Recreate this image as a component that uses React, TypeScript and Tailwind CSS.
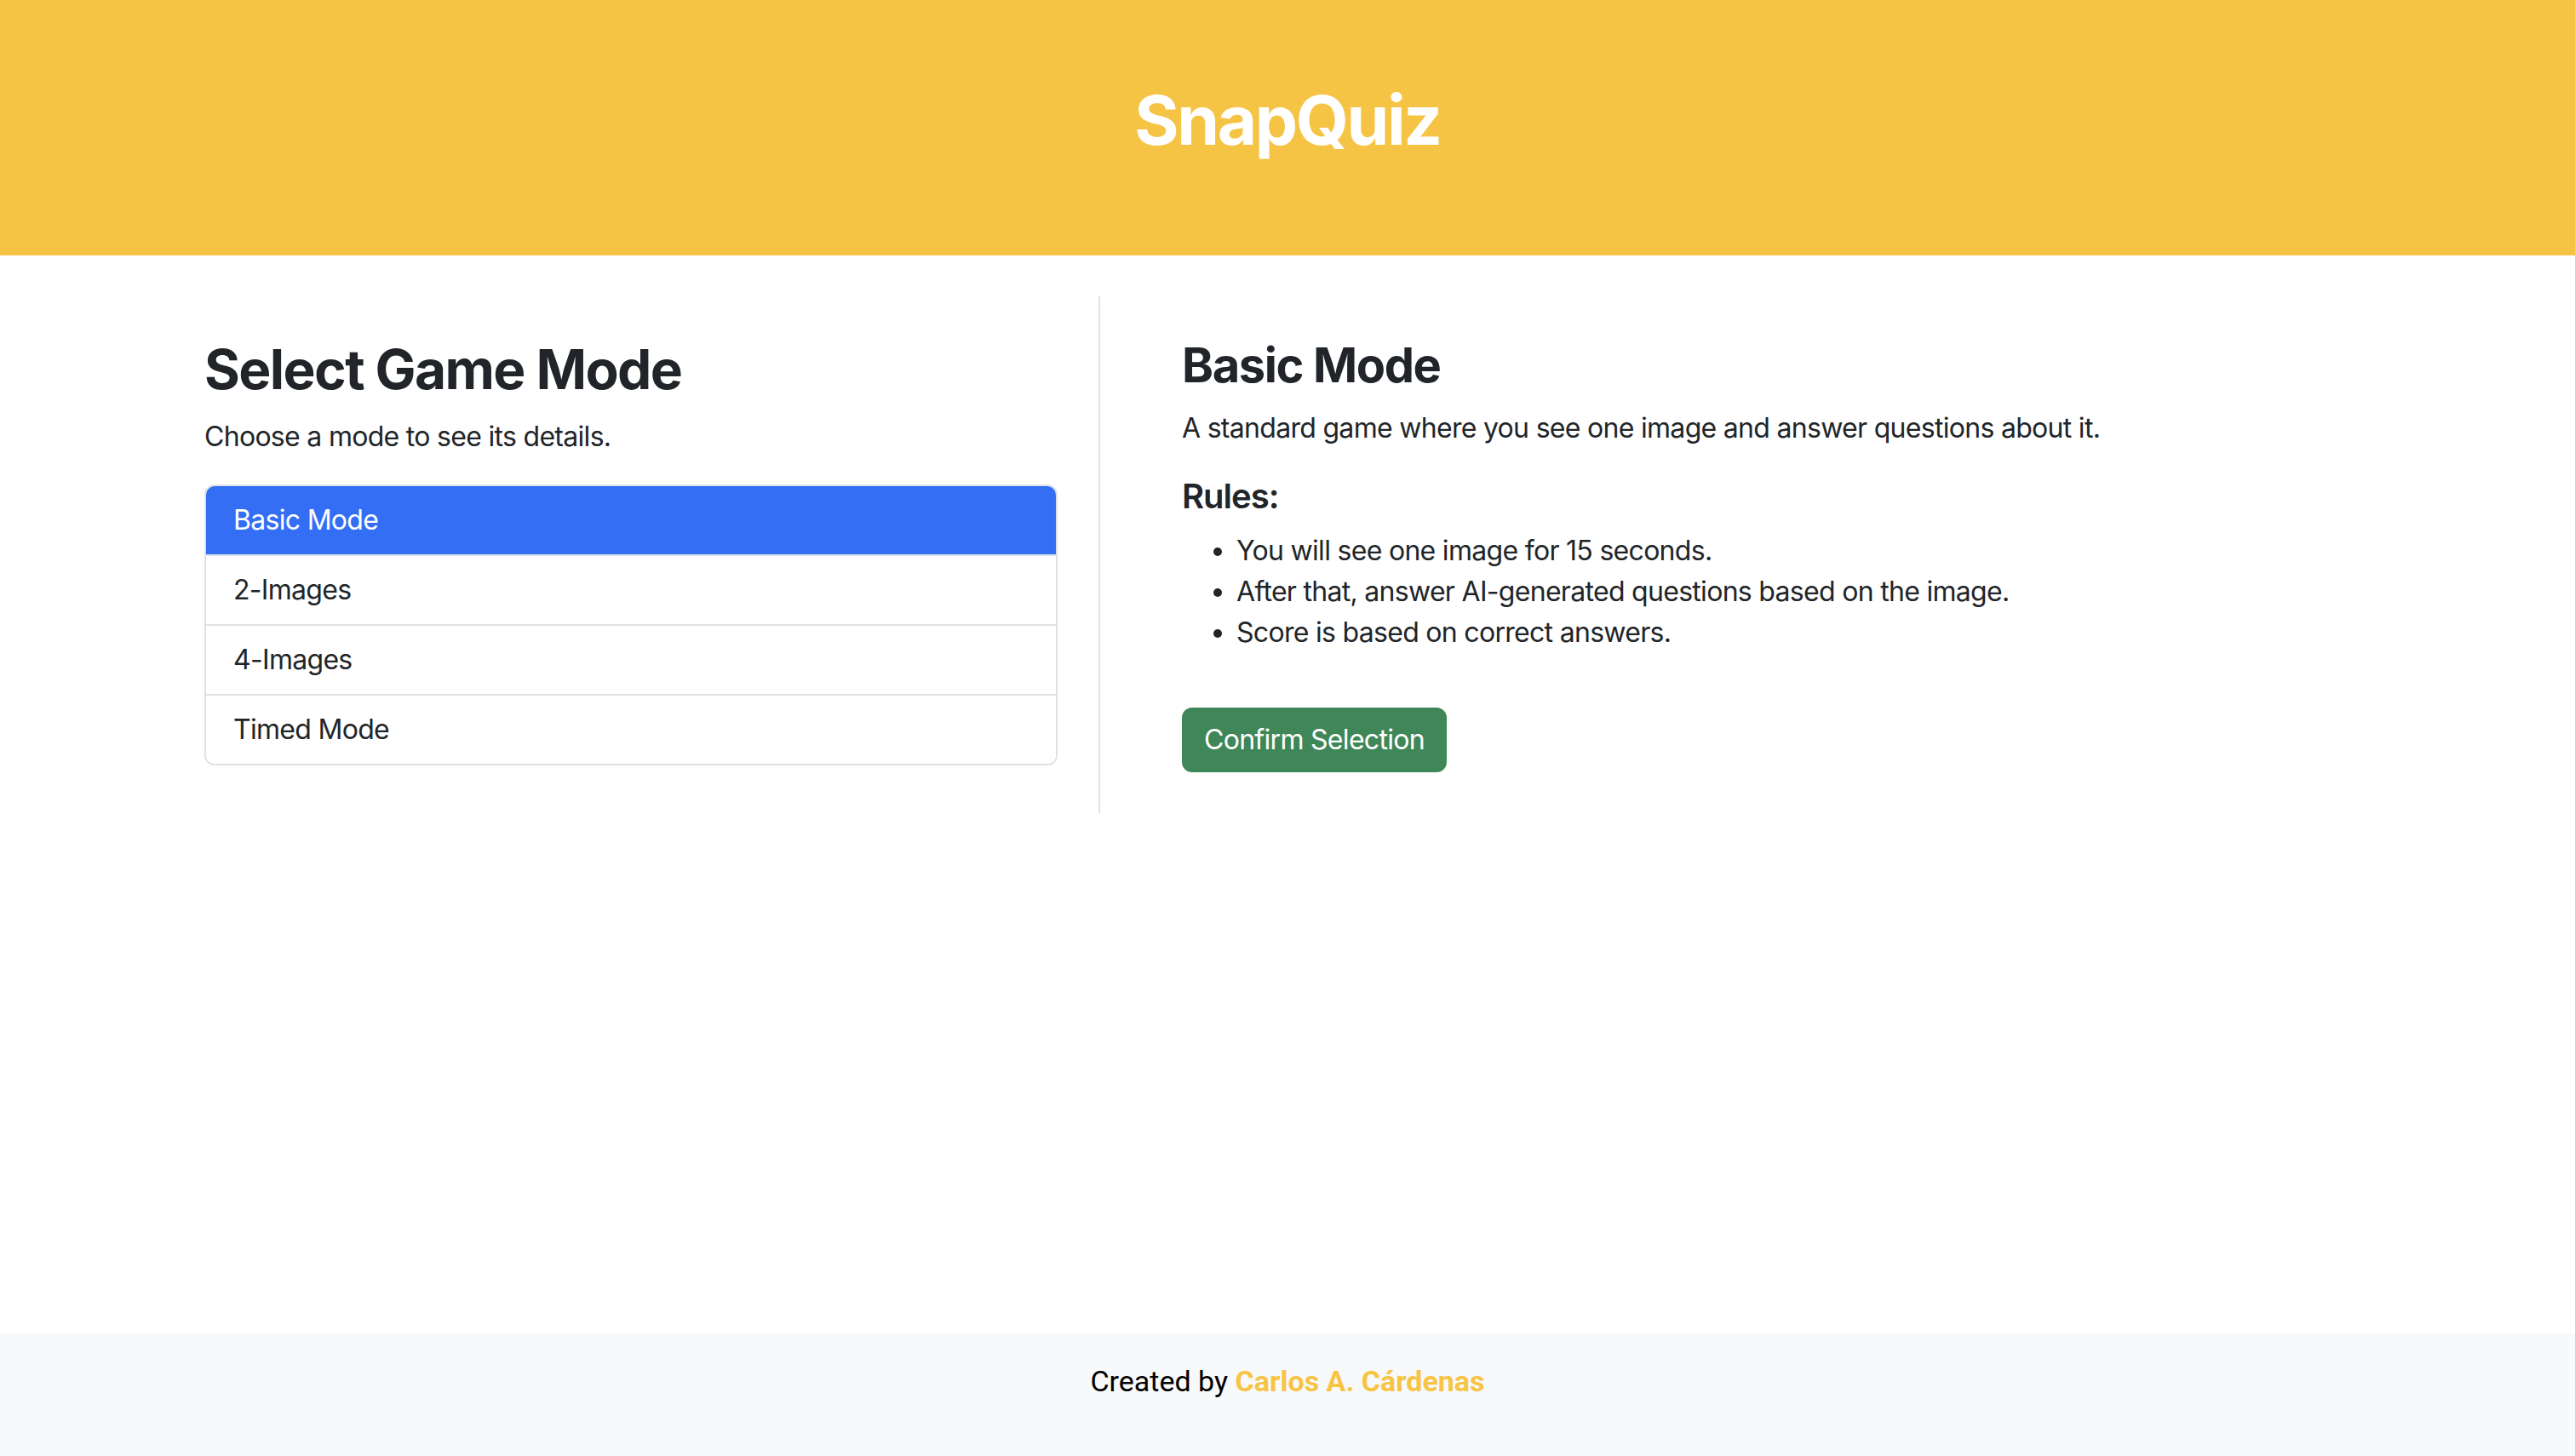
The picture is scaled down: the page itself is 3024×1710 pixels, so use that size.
import { useState } from 'react'

type ModeKey = 'basic' | 'two' | 'four' | 'timed'

interface Mode {
  key: ModeKey
  label: string
  title: string
  description: string
  rules: string[]
}

const MODES: Mode[] = [
  {
    key: 'basic',
    label: 'Basic Mode',
    title: 'Basic Mode',
    description: 'A standard game where you see one image and answer questions about it.',
    rules: [
      'You will see one image for 15 seconds.',
      'After that, answer AI-generated questions based on the image.',
      'Score is based on correct answers.',
    ],
  },
  {
    key: 'two',
    label: '2-Images',
    title: '2-Images',
    description: 'See two images one after another and answer questions about both.',
    rules: [
      'You will see two images for 15 seconds each.',
      'Questions may be about either image.',
      'Score is based on correct answers.',
    ],
  },
  {
    key: 'four',
    label: '4-Images',
    title: '4-Images',
    description: 'A harder game with four images to remember.',
    rules: [
      'You will see four images for 10 seconds each.',
      'Questions may be about any of the images.',
      'Score is based on correct answers.',
    ],
  },
  {
    key: 'timed',
    label: 'Timed Mode',
    title: 'Timed Mode',
    description: 'Answer as many questions as you can before the clock runs out.',
    rules: [
      'You will see one image for 15 seconds.',
      'Each question has a short time limit.',
      'Faster answers earn more points.',
    ],
  },
]

const font = "font-['Inter','Noto_Sans','Liberation_Sans',sans-serif]"

const App = () => {
  const [selected, setSelected] = useState<ModeKey>('basic')
  const mode = MODES.find((m) => m.key === selected) || MODES[0]

  return (
    <div className={`min-h-screen flex flex-col bg-white text-[#212529] tracking-[-0.7px] ${font}`}>
      {/* header */}
      <header className="h-[300px] bg-[#f6c445] pt-[93px] text-center">
        <h1 className="text-[80px] leading-[1.2] font-bold text-white tracking-[-2.4px]">SnapQuiz</h1>
      </header>

      {/* main */}
      <main className="flex-1">
        <div className="mx-auto w-[2640px] mt-[48px] flex">
          {/* mode list */}
          <div className="w-[1100px] shrink-0 p-[48px] border-r-2 border-[#dee2e6]">
            <h2 className="text-[64px] leading-[1.2] font-bold mb-[16px] tracking-[-1.6px]">Select Game Mode</h2>
            <p className="text-[32px] leading-[48px] mb-[32px]">Choose a mode to see its details.</p>
            <div className="flex flex-col border-2 border-[#dee2e6] rounded-[12px] overflow-hidden">
              {MODES.map((m, i) => (
                <button
                  key={m.key}
                  onClick={() => setSelected(m.key)}
                  className={`text-left px-[32px] py-[16px] text-[32px] leading-[48px] ${
                    i > 0 ? 'border-t-2 border-[#dee2e6]' : ''
                  } ${m.key === selected ? 'bg-[#346ef5] text-white' : 'bg-white text-[#212529]'}`}
                >
                  {m.label}
                </button>
              ))}
            </div>
          </div>

          {/* details */}
          <div className="flex-1 pl-[96px] py-[48px]">
            <h3 className="text-[56px] leading-[1.2] font-bold mb-[16px] tracking-[-1.4px]">{mode.title}</h3>
            <p className="text-[32px] leading-[48px] mb-[32px]">{mode.description}</p>
            <h5 className="text-[40px] leading-[48px] font-semibold mb-[16px] tracking-[-1px]">Rules:</h5>
            <ul className="list-disc pl-[64px] mb-[32px]">
              {mode.rules.map((r) => (
                <li key={r} className="text-[32px] leading-[48px]">{r}</li>
              ))}
            </ul>
            <button className="mt-[32px] h-[76px] px-[24px] rounded-[12px] bg-[#3f8759] text-white text-[32px] leading-[48px] border-2 border-[#3f8759]">
              Confirm Selection
            </button>
          </div>
        </div>
      </main>

      {/* footer */}
      <footer className="h-[144px] bg-[#f8f9fa] pt-[32px] text-center tracking-normal font-['Roboto','Liberation_Sans',sans-serif]">
        <p className="text-[34px] leading-[48px] text-black">
          Created by <span className="font-bold text-[#f7c444]">Carlos A. Cárdenas</span>
        </p>
      </footer>
    </div>
  )
}

export default App
